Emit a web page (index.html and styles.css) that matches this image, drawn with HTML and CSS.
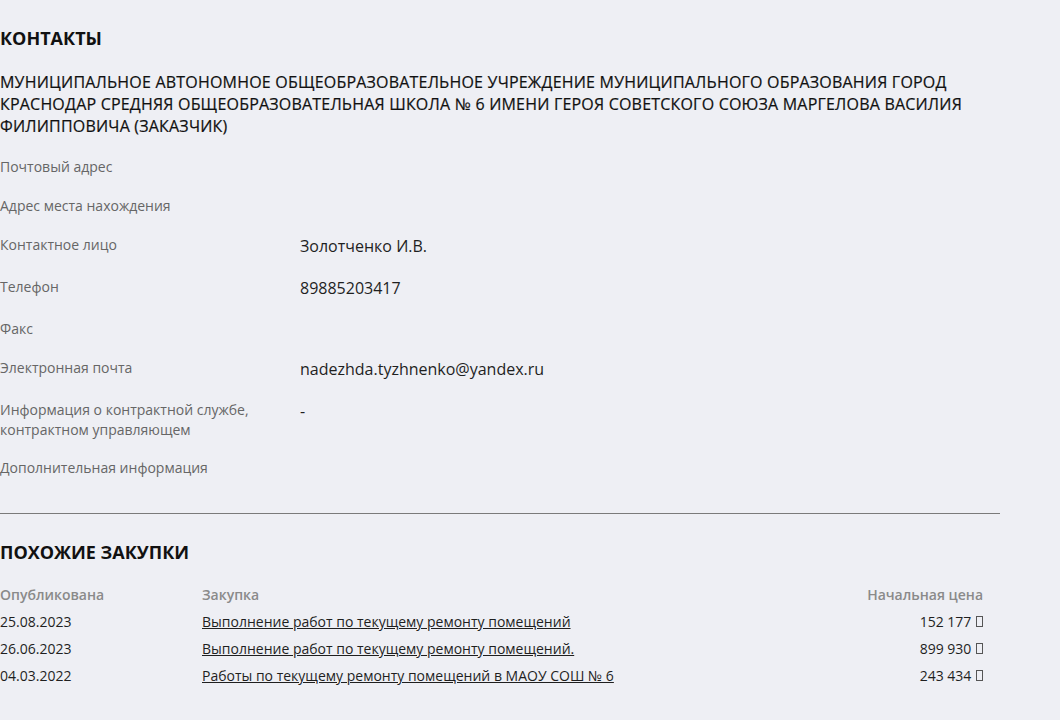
FILE: index.html
```html
<!DOCTYPE html>
<html lang="ru">
<head>
    <meta charset="UTF-8">
    <meta name="viewport" content="width=device-width, initial-scale=1.0">
    <title>Контакты</title>
    <link rel="stylesheet" href="styles.css">
</head>
<body>
    <div class="page">
        <section class="contacts">
            <h2 class="section-title">КОНТАКТЫ</h2>
            <h3 class="org-name">МУНИЦИПАЛЬНОЕ АВТОНОМНОЕ ОБЩЕОБРАЗОВАТЕЛЬНОЕ УЧРЕЖДЕНИЕ МУНИЦИПАЛЬНОГО ОБРАЗОВАНИЯ ГОРОД КРАСНОДАР СРЕДНЯЯ ОБЩЕОБРАЗОВАТЕЛЬНАЯ ШКОЛА № 6 ИМЕНИ ГЕРОЯ СОВЕТСКОГО СОЮЗА МАРГЕЛОВА ВАСИЛИЯ ФИЛИППОВИЧА (ЗАКАЗЧИК)</h3>

            <div class="info-row">
                <div class="info-label">Почтовый адрес</div>
                <div class="info-value"></div>
            </div>
            <div class="info-row">
                <div class="info-label">Адрес места нахождения</div>
                <div class="info-value"></div>
            </div>
            <div class="info-row">
                <div class="info-label">Контактное лицо</div>
                <div class="info-value">Золотченко И.В.</div>
            </div>
            <div class="info-row">
                <div class="info-label">Телефон</div>
                <div class="info-value">89885203417</div>
            </div>
            <div class="info-row">
                <div class="info-label">Факс</div>
                <div class="info-value"></div>
            </div>
            <div class="info-row">
                <div class="info-label">Электронная почта</div>
                <div class="info-value">nadezhda.tyzhnenko@yandex.ru</div>
            </div>
            <div class="info-row">
                <div class="info-label">Информация о контрактной службе, контрактном управляющем</div>
                <div class="info-value">-</div>
            </div>
            <div class="info-row">
                <div class="info-label">Дополнительная информация</div>
                <div class="info-value"></div>
            </div>
        </section>

        <hr class="divider">

        <section class="similar">
            <h2 class="section-title">ПОХОЖИЕ ЗАКУПКИ</h2>
            <div class="similar-table">
                <div class="cell head">Опубликована</div>
                <div class="cell head">Закупка</div>
                <div class="cell head price">Начальная цена</div>

                <div class="cell">25.08.2023</div>
                <div class="cell"><a href="#">Выполнение работ по текущему ремонту помещений</a></div>
                <div class="cell price">152 177 <span class="rub">₽</span></div>

                <div class="cell">26.06.2023</div>
                <div class="cell"><a href="#">Выполнение работ по текущему ремонту помещений.</a></div>
                <div class="cell price">899 930 <span class="rub">₽</span></div>

                <div class="cell">04.03.2022</div>
                <div class="cell"><a href="#">Работы по текущему ремонту помещений в МАОУ СОШ № 6</a></div>
                <div class="cell price">243 434 <span class="rub">₽</span></div>
            </div>
        </section>
    </div>
</body>
</html>
```

FILE: styles.css
```css
* {
    margin: 0;
    padding: 0;
    box-sizing: border-box;
}

body {
    font-family: "Open Sans", "Liberation Sans", sans-serif;
    background-color: #eeeff4;
    color: #1f1f1f;
}

.page {
    width: 1000px;
    padding-top: 26px;
}

.section-title {
    font-size: 18px;
    line-height: 24px;
    font-weight: 700;
    color: #111111;
}

.org-name {
    margin-top: 21px;
    margin-bottom: 20px;
    font-size: 16px;
    line-height: 22px;
    font-weight: 400;
    letter-spacing: 0.2px;
    -webkit-text-stroke: 0.2px #111111;
    color: #111111;
}

.info-row {
    display: grid;
    grid-template-columns: 300px 1fr;
    margin-bottom: 19px;
}

.info-label {
    font-size: 14px;
    line-height: 20px;
    color: #666666;
    padding-right: 40px;
}

.info-row:nth-child(9) .info-label {
    line-height: 19.5px;
}

.info-value {
    font-size: 16px;
    line-height: 23px;
    color: #1f1f1f;
}

.divider {
    border: none;
    border-top: 1px solid #7a7a7a;
    margin-top: 35px;
    margin-bottom: 26px;
}

.similar-table {
    display: grid;
    grid-template-columns: 202px 1fr auto;
    margin-top: 17px;
    padding-right: 17px;
}

.cell {
    font-size: 14px;
    line-height: 27px;
    color: #1f1f1f;
}

.cell.head {
    font-weight: 600;
    color: #8a8a8a;
}

.cell.price {
    text-align: right;
}

.cell a {
    color: #1f1f1f;
    text-decoration: underline;
}

.rub {
    display: inline-block;
    width: 7px;
    height: 11px;
    margin-left: 1px;
    border: 1px solid #555555;
    font-size: 9px;
    line-height: 9px;
    color: transparent;
    overflow: hidden;
    vertical-align: 0;
}
```
